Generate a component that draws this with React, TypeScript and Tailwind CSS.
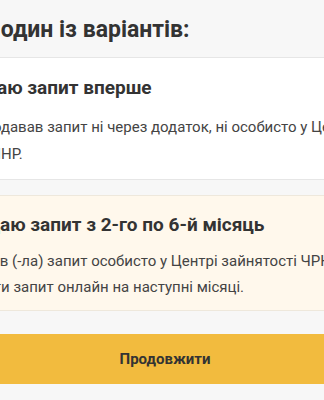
function Clipped({ w, hidden, children, className }: { w: string; hidden: string; children: React.ReactNode; className: string }) {
  return (
    <div className={"flex whitespace-nowrap " + className}>
      <span className={"flex justify-end shrink-0 " + w}>
        <span className="shrink-0">{hidden}</span>
      </span>
      <span>{children}</span>
    </div>
  );
}

export default function App() {
  return (
    <div className="w-[324px] h-[400px] overflow-hidden bg-[#f7f7f7]" style={{ fontFamily: "Roboto, 'Noto Sans', sans-serif" }}>
      <div className="ml-[-100px] w-[530px]">
        <div className="h-[58px] pl-[10px] pt-[15px] border-b border-[#e6e6e6]">
          <h1 className="text-[23px] leading-[30px] font-bold text-[#333] whitespace-nowrap">Оберіть один із варіантів:</h1>
        </div>
        <div className="bg-white border-b border-[#e6e6e6] pt-[17px] pb-[11px]">
          <h2>
            <Clipped w="w-[97px]" hidden="Под" className="text-[19px] leading-[26px] font-bold text-[#333]">аю запит вперше</Clipped>
          </h2>
          <div className="mt-[13px] text-[15px] leading-[27px] text-[#444]">
            <div className="pl-[18px] whitespace-nowrap">Ви ще не подавав запит ні через додаток, ні особисто у Центрі зайнятості</div>
            <Clipped w="w-[101px]" hidden="зайнятості Ч" className="">НР.</Clipped>
          </div>
        </div>
        <div className="mt-[15px] bg-[#fff8ec] border-y border-[#eee8dc] pt-[16px] pb-[10px]">
          <h2>
            <Clipped w="w-[100px]" hidden="Под" className="text-[19px] leading-[26px] font-bold text-[#333]">аю запит з 2-го по 6-й місяць</Clipped>
          </h2>
          <div className="mt-[10px] text-[15px] leading-[26px] text-[#444]">
            <div className="pl-[21px] whitespace-nowrap">Я вже подав (-ла) запит особисто у Центрі зайнятості ЧРНУ,</div>
            <Clipped w="w-[101px]" hidden="і хочу подат" className="">и запит онлайн на наступні місяці.</Clipped>
          </div>
        </div>
        <div className="mt-[23px]">
          <button className="w-full h-[50px] bg-[#f2bb3e] text-[15px] font-bold text-[#333]">Продовжити</button>
        </div>
      </div>
    </div>
  );
}
